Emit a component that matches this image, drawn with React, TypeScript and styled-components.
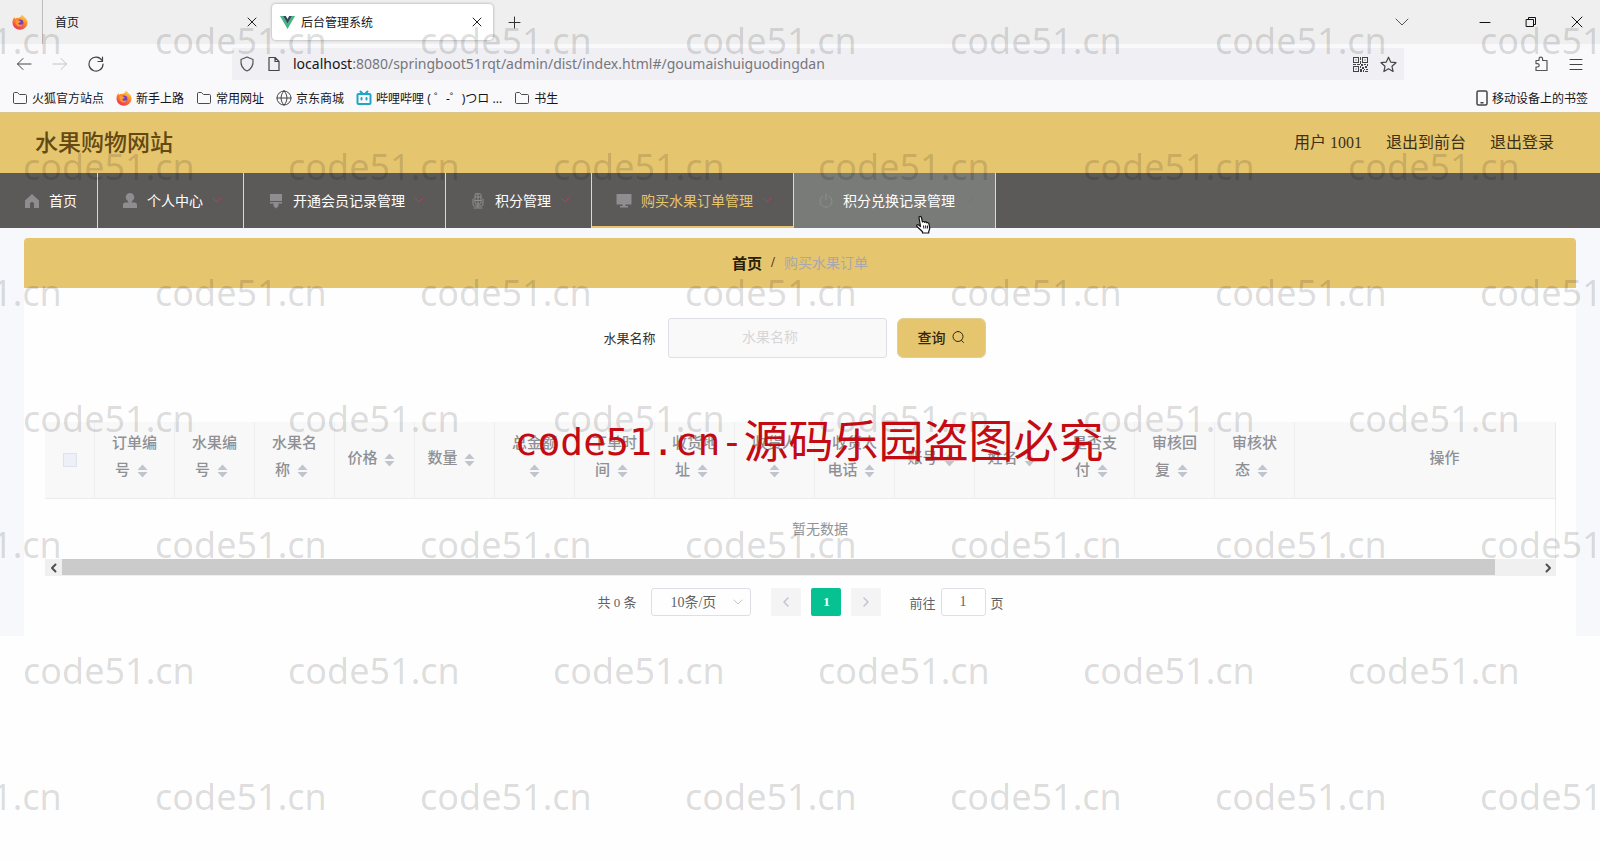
import React from "react";
import styled, { createGlobalStyle } from "styled-components";

const GOLD = "#e6c56f";
const UI = `"Noto Sans", "Noto Sans CJK SC", sans-serif`;
const SERIF = `"Liberation Serif", "Noto Sans CJK SC", serif`;

const GlobalStyle = createGlobalStyle`
  * { box-sizing: border-box; }
  body { margin: 0; background: #fefefe; font-family: ${SERIF}; }
  button, input, select { font: inherit; color: inherit; margin: 0; }
  button { border: 0; padding: 0; background: none; cursor: pointer; }
  a { color: inherit; text-decoration: none; }
  svg { display: block; flex: none; }
`;

const Page = styled.div`
  position: relative;
  min-height: 100vh;
  overflow: hidden;
`;

/* ---------- browser chrome ---------- */
const Chrome = styled.div`
  font-family: ${UI};
  font-size: 12px;
  color: #15141a;
  background: #f9f9fb;
`;
const TabStrip = styled.div`
  display: flex;
  align-items: center;
  height: 44px;
  padding-right: 17px;
  background: #efefef;
`;
const Pinned = styled.div`
  display: flex;
  align-items: center;
  width: 43px;
  height: 44px;
  padding-left: 12px;
  border-right: 1px solid #bbb;
`;
const Tab = styled.div<{ $active?: boolean }>`
  display: flex;
  align-items: center;
  gap: 6px;
  width: ${(p) => (p.$active ? 221 : 229)}px;
  height: 36px;
  padding: 0 ${(p) => (p.$active ? "11px 0 8px" : "15px 0 12px")};
  border-radius: 4px;
  background: ${(p) => (p.$active ? "#fff" : "transparent")};
  box-shadow: ${(p) => (p.$active ? "0 0 3px rgba(0, 0, 0, 0.35)" : "none")};
`;
const Grow = styled.span`
  flex: 1;
  min-width: 0;
`;
const NewTab = styled.button`
  margin-left: 15px;
`;
const WindowControls = styled.div`
  display: flex;
  align-items: center;
  gap: 34px;
`;
const AllTabs = styled.button`
  margin-right: 70px;
`;
const Toolbar = styled.div`
  display: flex;
  align-items: center;
  height: 40px;
  padding: 0 17px 0 16px;
`;
const History = styled.div`
  display: flex;
  gap: 20px;
  width: 216px;
`;
const AddressBar = styled.div`
  display: flex;
  align-items: center;
  gap: 12px;
  flex: 1;
  height: 32px;
  padding: 0 7px;
  background: #f0f0f4;
`;
const AddressText = styled.span`
  flex: 1;
  padding-bottom: 2px;
  font-family: "Noto Sans", sans-serif;
  font-size: 14px;
  color: #77767c;
  b { font-weight: 400; color: #15141a; }
`;
const Tools = styled.div`
  display: flex;
  align-items: center;
  gap: 20px;
  margin-left: 129px;
`;
const Bookmarks = styled.nav`
  display: flex;
  align-items: center;
  height: 28px;
  gap: 12px;
  padding: 0 12px;
`;
const Bookmark = styled.a`
  display: flex;
  align-items: center;
  gap: 4px;
  white-space: pre;
`;

/* ---------- site header ---------- */
const Header = styled.header`
  display: flex;
  align-items: center;
  justify-content: space-between;
  height: 61px;
  padding: 0 46px 4px 35px;
  background: ${GOLD};
  border-top: 1px solid #dcc68c;
  color: #3d3115;
`;
const Brand = styled.h1`
  margin: 0;
  font-size: 23px;
  font-weight: 500;
  color: #634a12;
`;
const Account = styled.div`
  display: flex;
  gap: 24px;
  font-size: 16px;
`;
const MenuBar = styled.nav`
  display: flex;
  height: 55px;
  background: #5c5a58;
`;
const MenuItem = styled.a<{ $active?: boolean; $hover?: boolean }>`
  display: flex;
  align-items: center;
  padding: 0 20px;
  border-right: 1px solid #d8d8d8;
  border-bottom: ${(p) => (p.$active ? `2px solid ${GOLD}` : "0")};
  padding-bottom: ${(p) => (p.$active ? 0 : 2)}px;
  background: ${(p) => (p.$hover ? "#797b79" : "transparent")};
  color: ${(p) => (p.$active ? GOLD : "#fff")};
  font-size: 14px;
  white-space: nowrap;
`;
const MenuIcon = styled.span`
  display: flex;
  justify-content: center;
  width: 24px;
  margin-right: 5px;
  padding-top: 3px;
  color: #8e8e90;
`;
const MenuArrow = styled.span<{ $dim?: boolean }>`
  margin-left: 8px;
  color: ${(p) => (p.$dim ? "#856f72" : "#a04a5a")};
`;

/* ---------- content ---------- */
const Content = styled.main`
  padding: 10px 24px 0;
  background: #f6f8fb;
`;
const Breadcrumb = styled.nav`
  display: flex;
  align-items: center;
  justify-content: center;
  gap: 9px;
  height: 50px;
  padding-bottom: 2px;
  border-radius: 4px 4px 0 0;
  background: ${GOLD};
  font-size: 14px;
  color: #a8a8a8;
`;
const Crumb = styled.a`
  font-size: 15px;
  font-weight: 700;
  color: #2a1d05;
`;
const Slash = styled.span`
  padding-top: 2px;
  font-weight: 700;
  color: #4a3a18;
`;
const Panel = styled.section`
  padding: 30px 20px 20px 21px;
  background: #fefefe;
`;
const SearchForm = styled.form`
  display: flex;
  align-items: center;
  justify-content: center;
  gap: 10px;
  margin-bottom: 64px;
  padding-right: 12px;
`;
const SearchLabel = styled.label`
  padding: 0 2px 2px 0;
  font-size: 13px;
  color: #333;
`;
const SearchInput = styled.input`
  width: 219px;
  height: 40px;
  padding: 0 14px 0 0;
  border: 1px solid #dcdfe6;
  border-radius: 3px;
  background: #f9f9f9;
  text-align: center;
  font-size: 14px;
  &::placeholder { color: #d6d6d8; }
`;
const SearchButton = styled.button`
  display: flex;
  align-items: center;
  justify-content: center;
  gap: 5px;
  width: 89px;
  height: 40px;
  padding-bottom: 2px;
  border-radius: 7px;
  background: ${GOLD};
  box-shadow: inset 0 0 0 1px #e3cf96;
  font-size: 14px;
  font-weight: 500;
  color: #33270c;
`;
const TableFrame = styled.div`
  overflow: hidden;
  border-right: 1px solid #e9ebef;
`;
const Grid = styled.table`
  width: 1550px;
  table-layout: fixed;
  border-collapse: separate;
  border-spacing: 0;
`;
const Th = styled.th<{ $wrapped?: boolean }>`
  height: 77px;
  padding: 0 10px ${(p) => (p.$wrapped ? 7 : 3)}px;
  border-right: 1px solid #eeeff1;
  border-bottom: 1px solid #ebebed;
  background: #f8f8f9;
  font-size: 15px;
  line-height: 27px;
  font-weight: 500;
  color: #8e9094;
`;
const Caret = styled.button`
  display: inline-flex;
  justify-content: center;
  width: 24px;
  height: 14px;
  vertical-align: middle;
`;
const Tick = styled.input`
  appearance: none;
  display: block;
  width: 14px;
  height: 14px;
  margin: 3px auto 0;
  border: 1px solid #dfe2ea;
  background: #edf0f8;
`;
const Empty = styled.td`
  height: 60px;
  padding: 0 0 2px;
  text-align: center;
  font-size: 14px;
  color: #909399;
`;
const ScrollBar = styled.div`
  display: flex;
  height: 17px;
  background: #f0f0f0;
`;
const ScrollButton = styled.button`
  display: flex;
  align-items: center;
  justify-content: center;
  width: 17px;
`;
const ScrollTrack = styled.div`
  flex: 1;
`;
const ScrollThumb = styled.div`
  width: 97%;
  height: 16px;
  background: #cbcbcb;
`;
const Pagination = styled.div`
  display: flex;
  align-items: center;
  justify-content: center;
  gap: 10px;
  margin-top: 12px;
  font-size: 13px;
  color: #606266;
`;
const Total = styled.span`
  margin-right: 5px;
  padding-bottom: 2px;
`;
const SizeBox = styled.span`
  display: flex;
  align-items: center;
  width: 100px;
  height: 28px;
  margin-right: 10px;
  padding-right: 7px;
  border: 1px solid #dcdfe6;
  border-radius: 3px;
  color: #c0c4cc;
`;
const SizeSelect = styled.select`
  appearance: none;
  flex: 1;
  min-width: 0;
  border: 0;
  padding-left: 18px;
  background: none;
  font-size: 14px;
  color: #606266;
`;
const PageButton = styled.button<{ $active?: boolean }>`
  display: flex;
  align-items: center;
  justify-content: center;
  width: 30px;
  height: 28px;
  border-radius: 2px;
  background: ${(p) => (p.$active ? "#06c192" : "#f4f4f5")};
  color: ${(p) => (p.$active ? "#fff" : "#c0c4cc")};
  font-weight: 700;
`;
const Jump = styled.label`
  display: flex;
  align-items: center;
  gap: 5px;
  margin-left: 18px;
`;
const JumpInput = styled.input`
  width: 45px;
  height: 28px;
  border: 1px solid #dcdfe6;
  border-radius: 3px;
  background: #fff;
  text-align: center;
  font-size: 14px;
`;

/* ---------- overlays ---------- */
const Marks = styled.div`
  position: absolute;
  inset: 0;
  overflow: hidden;
  pointer-events: none;
  font: 36px/50px "Noto Sans", sans-serif;
  color: rgba(0, 0, 0, 0.14);
`;
const Mark = styled.span`
  position: absolute;
`;
const Notice = styled.div`
  position: absolute;
  top: 403px;
  left: 0;
  right: 0;
  display: flex;
  align-items: center;
  justify-content: center;
  padding-left: 18px;
  font: 45px/66px "Noto Sans CJK SC", sans-serif;
  color: #c40a12;
  pointer-events: none;
  white-space: pre;
`;
const NoticeLatin = styled.span`
  padding-top: 6px;
  font-family: "DejaVu Sans Mono", monospace;
  font-size: 38px;
`;
const Pointer = styled.svg`
  position: absolute;
  left: 915px;
  top: 215px;
`;

/* ---------- icons ---------- */
type LineProps = { d: string; w?: number; h?: number; sw?: number; color?: string };
const Line = ({ d, w = 16, h = w, sw = 1, color = "currentColor" }: LineProps) => (
  <svg width={w} height={h} viewBox={`0 0 ${w} ${h}`} fill="none" stroke={color} strokeWidth={sw} strokeLinejoin="round" strokeLinecap="round" aria-hidden="true">
    <path d={d} />
  </svg>
);
const Firefox = () => (
  <svg width="16" height="16" viewBox="0 0 16 16" aria-hidden="true">
    <defs>
      <linearGradient id="ff" x1="0.8" y1="0" x2="0.3" y2="1">
        <stop offset="0" stopColor="#ffe14a" />
        <stop offset="0.45" stopColor="#ff8a2a" />
        <stop offset="1" stopColor="#f0305a" />
      </linearGradient>
    </defs>
    <path fill="url(#ff)" d="M10 .5c1 1 1.500 1.800 2.200 2.500C14.500 4.500 15.700 6.500 15.500 9c-.3 3.900-3.500 6.700-7.500 6.700S.6 12.600.5 8.700C.4 6.300 1.300 4.500 2.500 3c0 .7.200 1.200.6 1.700C4.200 3.700 5.500 3.500 7 3.700 8 3.500 9.300 2.300 10 .5Z" />
    <circle cx="8" cy="9" r="3.400" fill="#7a3fc0" />
    <path fill="#ff9a2c" d="M3.500 6.500c2-.8 3-.2 4.500.5 1 .5.500 1.500-.7 1.600-.9.100-1.300.900-.5 1.600 1 .8 2.600.6 4-.3-.6 2.300-2.600 3-4.300 2.500C4 11.700 3 9 3.500 6.500Z" />
  </svg>
);
const Folder = () => <Line w={16} d="M1.500 3.500a1 1 0 0 1 1-1h3l2 2h6a1 1 0 0 1 1 1v7a1 1 0 0 1-1 1h-11a1 1 0 0 1-1-1z" color="#4a4a50" />;
const Close = () => <Line w={10} d="M1 1l8 8M9 1l-8 8" color="#222" />;
const Bilibili = () => (
  <svg width="16" height="16" viewBox="0 0 16 16" fill="none" stroke="#20a5c4" strokeWidth="2" strokeLinecap="round" aria-hidden="true">
    <path d="M4.500 1.500l2 2M11.500 1.500l-2 2M2.500 4h11a1 1 0 0 1 1 1v8a1 1 0 0 1-1 1h-11a1 1 0 0 1-1-1V5a1 1 0 0 1 1-1zM5.500 8v1.500M10.500 8v1.500" />
  </svg>
);
const Qr = () => (
  <svg width="15" height="15" viewBox="0 0 15 15" fill="#444" aria-hidden="true">
    <path fillRule="evenodd" d="M0 0h6v6H0zM1 1v4h4V1zM2.500 2.500h1v1h-1zM9 0h6v6H9zM10 1v4h4V1zM11.500 2.500h1v1h-1zM0 9h6v6H0zM1 10v4h4v-4zM2.500 11.500h1v1h-1zM7 0h1v3H7zM7 4h1v3H7zM0 7h3v1H0zM4 7h3v1H4zM8 7h2v2H8zM11 7h2v1h-2zM14 7h1v2h-1zM7 9h1v2H7zM9 10h2v2H9zM12 9h2v2h-2zM7 12h2v3H7zM11 12h1v1h-1zM13 12h2v1h-2zM10 13h1v2h-1zM12 14h3v1h-3z" />
  </svg>
);
const Sort = () => (
  <svg width="11" height="14" viewBox="0 0 11 14" fill="#c0c4cc" aria-hidden="true">
    <path d="M5.500 0.500l5 5.500h-10zM5.500 13.500l5-5.500h-10z" />
  </svg>
);
const Solid = ({ d }: { d: string }) => (
  <svg width="16" height="16" viewBox="0 0 16 16" fill="currentColor" fillRule="evenodd" aria-hidden="true">
    <path d={d} />
  </svg>
);

const menuIcons: Record<string, React.ReactNode> = {
  home: <Solid d="M8 1L1 7.500V15h5v-4a2 2 0 0 1 4 0v4h5V7.500z" />,
  user: <Solid d="M8 0a4.200 4.200 0 0 1 2.500 7.600L9.500 9.500h3A2.500 2.500 0 0 1 15 12v3H1v-3a2.500 2.500 0 0 1 2.500-2.500h3L5.500 7.600A4.200 4.200 0 0 1 8 0z" />,
  brush: <Solid d="M2 1h12v7H2zM2 9h12v1.500h-3.500V13L8 15.500 5.500 13v-2.500H2z" />,
  mic: <Line d="M6 .8h4a1 1 0 0 1 1 1V10a1 1 0 0 1-1 1H6a1 1 0 0 1-1-1V1.800a1 1 0 0 1 1-1zM5 4h6M5 7.500h6M8 1v13.500M3 6v5.500a1.500 1.500 0 0 0 1.500 1.500h7a1.500 1.500 0 0 0 1.500-1.500V6M4 15h8" />,
  screen: <Solid d="M.5 1h15v10.500H9.500V13H12v1.500H4V13h2.500v-1.500h-6z" />,
  power: <Line d="M8 1v6M5 3a6 6 0 1 0 6 0" />,
};

const menu = [
  { icon: "home", text: "首页", plain: true },
  { icon: "user", text: "个人中心" },
  { icon: "brush", text: "开通会员记录管理" },
  { icon: "mic", text: "积分管理" },
  { icon: "screen", text: "购买水果订单管理", active: true },
  { icon: "power", text: "积分兑换记录管理", hover: true },
];
const columns = ["订单编号", "水果编号", "水果名称", "价格", "数量", "总金额", "下单时间", "收货地址", "收货人", "收货人电话", "账号", "姓名", "是否支付", "审核回复", "审核状态"];
const bookmarks = [
  { icon: <Folder />, text: "火狐官方站点" },
  { icon: <Firefox />, text: "新手上路" },
  { icon: <Folder />, text: "常用网址" },
  { icon: <Line w={16} color="#444" d="M8 1a7 7 0 1 0 0 14A7 7 0 0 0 8 1zM1 8h14M8 1c-4 3.500-4 10.500 0 14M8 1c4 3.500 4 10.500 0 14" />, text: "京东商城" },
  { icon: <Bilibili />, text: "哔哩哔哩 ( ゜-゜)つロ ..." },
  { icon: <Folder />, text: "书生" },
];

const marks: { x: number; y: number }[] = [];
for (let row = 0; row < 7; row++) {
  for (let col = 0; col < 7 - (row % 2); col++) {
    marks.push({ x: (row % 2 ? 23 : -110) + col * 265, y: 16 + row * 126 });
  }
}

export default function App() {
  return (
    <Page>
      <GlobalStyle />
      <Chrome>
        <TabStrip>
          <Pinned><Firefox /></Pinned>
          <Tab>
            <Grow>首页</Grow>
            <button aria-label="关闭标签页"><Close /></button>
          </Tab>
          <Tab $active>
            <svg width="15" height="13" viewBox="0 0 15 13" aria-hidden="true">
              <path fill="#41b883" d="M0 0h3l4.500 7.800L12 0h3L7.500 13z" />
              <path fill="#35495e" d="M3 0h2.800l1.700 3L9.200 0H12L7.500 7.800z" />
            </svg>
            <Grow>后台管理系统</Grow>
            <button aria-label="关闭标签页"><Close /></button>
          </Tab>
          <NewTab aria-label="新标签页"><Line w={13} d="M6.500 1v11M1 6.500h11" color="#333" /></NewTab>
          <Grow />
          <AllTabs aria-label="所有标签页"><Line w={14} d="M1 4l6 6 6-6" color="#555" /></AllTabs>
          <WindowControls>
            <button aria-label="最小化"><Line w={12} d="M1 6.500h10" color="#111" /></button>
            <button aria-label="还原"><Line w={12} d="M1.500 3.500h7v7h-7zM3.500 3.500v-2h7v7h-2" color="#111" /></button>
            <button aria-label="关闭"><Line w={12} d="M1 1l10 10M11 1L1 11" color="#111" /></button>
          </WindowControls>
        </TabStrip>
        <Toolbar>
          <History>
            <button aria-label="后退"><Line w={16} d="M15 8H1.500M7 2.500L1.500 8 7 13.500" color="#444" /></button>
            <button aria-label="前进"><Line w={16} d="M1 8h13.500M9 2.500L14.500 8 9 13.500" color="#c4c4c8" /></button>
            <button aria-label="刷新"><Line w={16} sw={1.2} d="M14 4.500A7 7 0 1 0 15 8M14.500 1v4.500H10" color="#444" /></button>
          </History>
          <AddressBar>
            <Line w={16} sw={1.2} d="M8 1l6 2.500c.5 5-1.500 9.500-6 11.500-4.500-2-6.500-6.500-6-11.500z" color="#555" />
            <Line w={14} h={16} sw={1.2} d="M2 1.500h6l4 4v9H2zM8 1.500v4h4" color="#444" />
            <AddressText><b>localhost</b>:8080/springboot51rqt/admin/dist/index.html#/goumaishuiguodingdan</AddressText>
            <Qr />
            <Line w={17} sw={1.2} d="M8.500 1.200l2.200 4.900 5.300.6-4 3.600 1.100 5.200-4.600-2.700-4.600 2.700L5 10.300 1 6.700l5.300-.6z" color="#444" />
          </AddressBar>
          <Tools>
            <button aria-label="扩展"><Line w={16} sw={1.2} d="M6 4.500V3a1.800 1.800 0 0 1 3.600 0v1.500H14v10H3V11h1.500a1.700 1.700 0 0 0 0-3.400H3V4.500z" color="#555" /></button>
            <button aria-label="菜单"><Line w={14} d="M1 2.500h12M1 7.500h12M1 12.500h12" color="#444" /></button>
          </Tools>
        </Toolbar>
        <Bookmarks>
          {bookmarks.map((b) => (
            <Bookmark href="#" key={b.text}>{b.icon}{b.text}</Bookmark>
          ))}
          <Grow />
          <Bookmark href="#">
            <Line w={12} h={16} sw={1.5} d="M2.500 1h7a1.500 1.500 0 0 1 1.500 1.500v11A1.500 1.500 0 0 1 9.500 15h-7A1.500 1.500 0 0 1 1 13.500v-11A1.500 1.500 0 0 1 2.500 1zM5 12.800h2" color="#444" />
            移动设备上的书签
          </Bookmark>
        </Bookmarks>
      </Chrome>

      <Header>
        <Brand>水果购物网站</Brand>
        <Account>
          <span>用户 1001</span>
          <a href="#">退出到前台</a>
          <a href="#">退出登录</a>
        </Account>
      </Header>
      <MenuBar>
        {menu.map((m) => (
          <MenuItem href="#" key={m.text} $active={m.active} $hover={m.hover}>
            <MenuIcon>{menuIcons[m.icon]}</MenuIcon>
            {m.text}
            {!m.plain && <MenuArrow $dim={m.hover}><Line w={12} d="M2 4l4 4 4-4" /></MenuArrow>}
          </MenuItem>
        ))}
      </MenuBar>

      <Content>
        <Breadcrumb>
          <Crumb href="#">首页</Crumb>
          <Slash>/</Slash>
          <span>购买水果订单</span>
        </Breadcrumb>
        <Panel>
          <SearchForm onSubmit={(e) => e.preventDefault()}>
            <SearchLabel htmlFor="fruit">水果名称</SearchLabel>
            <SearchInput id="fruit" placeholder="水果名称" />
            <SearchButton type="submit">
              查询
              <Line w={14} d="M7 1.500a5 5 0 1 0 0 10 5 5 0 0 0 0-10zM10.500 10.500l2 2" />
            </SearchButton>
          </SearchForm>

          <TableFrame>
            <Grid>
              <colgroup>
                <col width="50" />
                {columns.map((c) => <col key={c} width="80" />)}
                <col />
              </colgroup>
              <thead>
                <tr>
                  <Th><Tick type="checkbox" aria-label="全选" /></Th>
                  {columns.map((c) => (
                    <Th key={c} $wrapped={c.length > 2}>{c}<Caret aria-label={`按${c}排序`}><Sort /></Caret></Th>
                  ))}
                  <Th>操作</Th>
                </tr>
              </thead>
              <tbody>
                <tr><Empty colSpan={columns.length + 2}>暂无数据</Empty></tr>
              </tbody>
            </Grid>
          </TableFrame>
          <ScrollBar>
            <ScrollButton aria-label="向左滚动"><Line w={10} sw={2} d="M6.500 1.500L3 5l3.500 3.500" color="#505050" /></ScrollButton>
            <ScrollTrack><ScrollThumb /></ScrollTrack>
            <ScrollButton aria-label="向右滚动"><Line w={10} sw={2} d="M3.500 1.500L7 5 3.500 8.500" color="#505050" /></ScrollButton>
          </ScrollBar>

          <Pagination>
            <Total>共 0 条</Total>
            <SizeBox>
              <SizeSelect aria-label="每页条数"><option>10条/页</option></SizeSelect>
              <Line w={10} d="M1 3l4 4 4-4" />
            </SizeBox>
            <PageButton aria-label="上一页"><Line w={10} sw={1.5} d="M7 1L3 5l4 4" /></PageButton>
            <PageButton $active>1</PageButton>
            <PageButton aria-label="下一页"><Line w={10} sw={1.5} d="M3 1l4 4-4 4" /></PageButton>
            <Jump>前往<JumpInput defaultValue="1" />页</Jump>
          </Pagination>
        </Panel>
      </Content>

      <Marks aria-hidden="true">
        {marks.map((m) => (
          <Mark key={`${m.x}-${m.y}`} style={{ left: m.x, top: m.y }}>code51.cn</Mark>
        ))}
      </Marks>
      <Notice><NoticeLatin>code51.cn-</NoticeLatin>源码乐园盗图必究</Notice>
      <Pointer width="17" height="19" viewBox="0 0 17 19" aria-hidden="true">
        <path fill="#fff" stroke="#111" strokeWidth="1.200" strokeLinejoin="round" d="M4 2.500c0-1.500 2.200-1.500 2.400 0L7.500 7c.5-.8 2-.6 2.200.3.600-.7 2-.4 2.200.5.700-.5 1.900-.1 2 .9l.8 4c.2 1.500-.5 2.500-1 3.800v1.500H7.500v-1.300L2 11.500c-1-1.200.5-2.300 1.700-1.400l1.800 1.400z" />
        <path stroke="#111" strokeWidth="1" d="M8.500 10.500l.4 3M10.500 10.500l.4 3M12.300 10.500l.4 3" />
      </Pointer>
    </Page>
  );
}
